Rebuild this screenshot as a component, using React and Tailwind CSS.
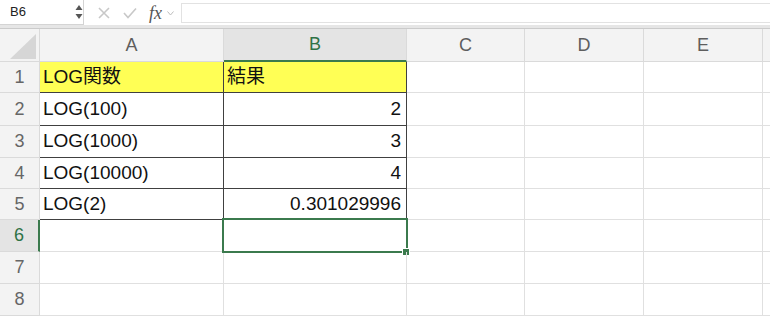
import React from "react";

const F = { fontFamily: '"Liberation Sans", "Noto Sans CJK JP", sans-serif' };

const rows = [
  { n: 1, h: "h-[31px]", a: "LOG関数", b: "結果", yellow: true, table: true },
  { n: 2, h: "h-[33px]", a: "LOG(100)", b: "2", table: true },
  { n: 3, h: "h-[32px]", a: "LOG(1000)", b: "3", table: true },
  { n: 4, h: "h-[31px]", a: "LOG(10000)", b: "4", table: true },
  { n: 5, h: "h-[31px]", a: "LOG(2)", b: "0.301029996", table: true },
  { n: 6, h: "h-[32px]", a: "", b: "", sel: true },
  { n: 7, h: "h-[32px]", a: "", b: "" },
  { n: 8, h: "h-[32px]", a: "", b: "" },
];

const cols = "grid-cols-[40px_184px_183px_118px_119px_119px_1fr]";

export default function App() {
  return (
    <div className="w-[770px] h-[322px] overflow-hidden bg-white text-[#111]" style={F}>
      {/* formula bar */}
      <div className="flex h-[25px] bg-white">
        <div className="relative w-[84px] h-[25px] border-r border-b border-[#d4d4d4] bg-white flex items-center">
          <span className="pl-[10px] text-[13px] text-[#222]">B6</span>
          <svg className="absolute left-[75px] top-[4px]" width="8" height="16" viewBox="0 0 8 16">
            <path d="M4 1 L7.5 6 L0.5 6 Z" fill="#555" />
            <path d="M4 15 L7.5 10 L0.5 10 Z" fill="#555" />
          </svg>
        </div>
        <div className="flex items-center h-[25px]">
          <svg className="ml-[14px]" width="12" height="12" viewBox="0 0 12 12">
            <path d="M1 1 L11 11 M11 1 L1 11" stroke="#c8c8c8" strokeWidth="1.6" />
          </svg>
          <svg className="ml-[13px]" width="14" height="12" viewBox="0 0 14 12">
            <path d="M1 6 L5 10.5 L13 1.5" stroke="#c8c8c8" strokeWidth="1.6" fill="none" />
          </svg>
          <span
            className="ml-[12px] text-[18px] italic text-[#555] leading-none"
            style={{ fontFamily: '"Liberation Serif", serif' }}
          >
            fx
          </span>
          <svg className="ml-[5px] mt-[2px]" width="7" height="5" viewBox="0 0 7 5">
            <path d="M0.5 0.5 L3.5 4 L6.5 0.5" stroke="#bdbdbd" strokeWidth="1" fill="none" />
          </svg>
        </div>
        <div className="ml-[7px] flex-1 mt-[3px] h-[20px] border border-r-0 border-[#e2e2e2] bg-white" />
      </div>
      <div className="h-[4px] bg-[#e6e6e6] border-b border-[#cbcbcb]" />

      {/* header row */}
      <div className={`grid ${cols} h-[33px] bg-[#f3f3f3] text-[18px] text-[#5e5e5e]`}>
        <div className="relative border-r border-b border-[#dadada]">
          <svg className="absolute left-[10px] top-[4px]" width="27" height="26" viewBox="0 0 27 26">
            <path d="M0 26 L26 26 L26 1 Z" fill="#d6d6d6" />
          </svg>
        </div>
        <div className="border-r border-b border-[#dadada] flex items-center justify-center">A</div>
        <div className="border-r border-[#dadada] border-b-2 border-b-[#3b7a4d] bg-[#e4e4e4] flex items-center justify-center text-[#2e7246]">
          B
        </div>
        <div className="border-r border-b border-[#dadada] flex items-center justify-center">C</div>
        <div className="border-r border-b border-[#dadada] flex items-center justify-center">D</div>
        <div className="border-r border-b border-[#dadada] flex items-center justify-center">E</div>
        <div className="border-b border-[#dadada]" />
      </div>

      {rows.map((r) => (
        <div key={r.n} className={`grid ${cols} ${r.h}`}>
          <div
            className={`flex items-center justify-center border-b border-[#dadada] text-[18px] ${
              r.sel
                ? "bg-[#e4e4e4] text-[#2e7246] border-r-2 border-r-[#3b7a4d]"
                : "bg-[#f3f3f3] text-[#666] border-r border-r-[#dadada]"
            }`}
          >
            {r.n}
          </div>
          <div
            className={`flex items-center pl-[3px] text-[19px] border-r border-b ${
              r.table ? "border-[#404040]" : "border-[#e0e0e0]"
            } ${r.yellow ? "bg-[#ffff55]" : ""}`}
          >
            {r.a}
          </div>
          <div
            className={`relative flex items-center text-[19px] border-r border-b ${
              r.table ? "border-[#404040]" : "border-[#e0e0e0]"
            } ${r.yellow ? "bg-[#ffff55] pl-[3px]" : "justify-end pr-[5px]"}`}
          >
            {r.b}
            {r.sel && (
              <div className="absolute left-[-2px] top-[-2px] w-[186px] h-[35px] border-2 border-[#3b7a4d]">
                <div className="absolute left-[179px] top-[29px] w-[6px] h-[6px] bg-[#3b7a4d] outline outline-1 outline-white" />
              </div>
            )}
          </div>
          <div className="border-r border-b border-[#e0e0e0]" />
          <div className="border-r border-b border-[#e0e0e0]" />
          <div className="border-r border-b border-[#e0e0e0]" />
          <div className="border-b border-[#e0e0e0]" />
        </div>
      ))}
    </div>
  );
}
